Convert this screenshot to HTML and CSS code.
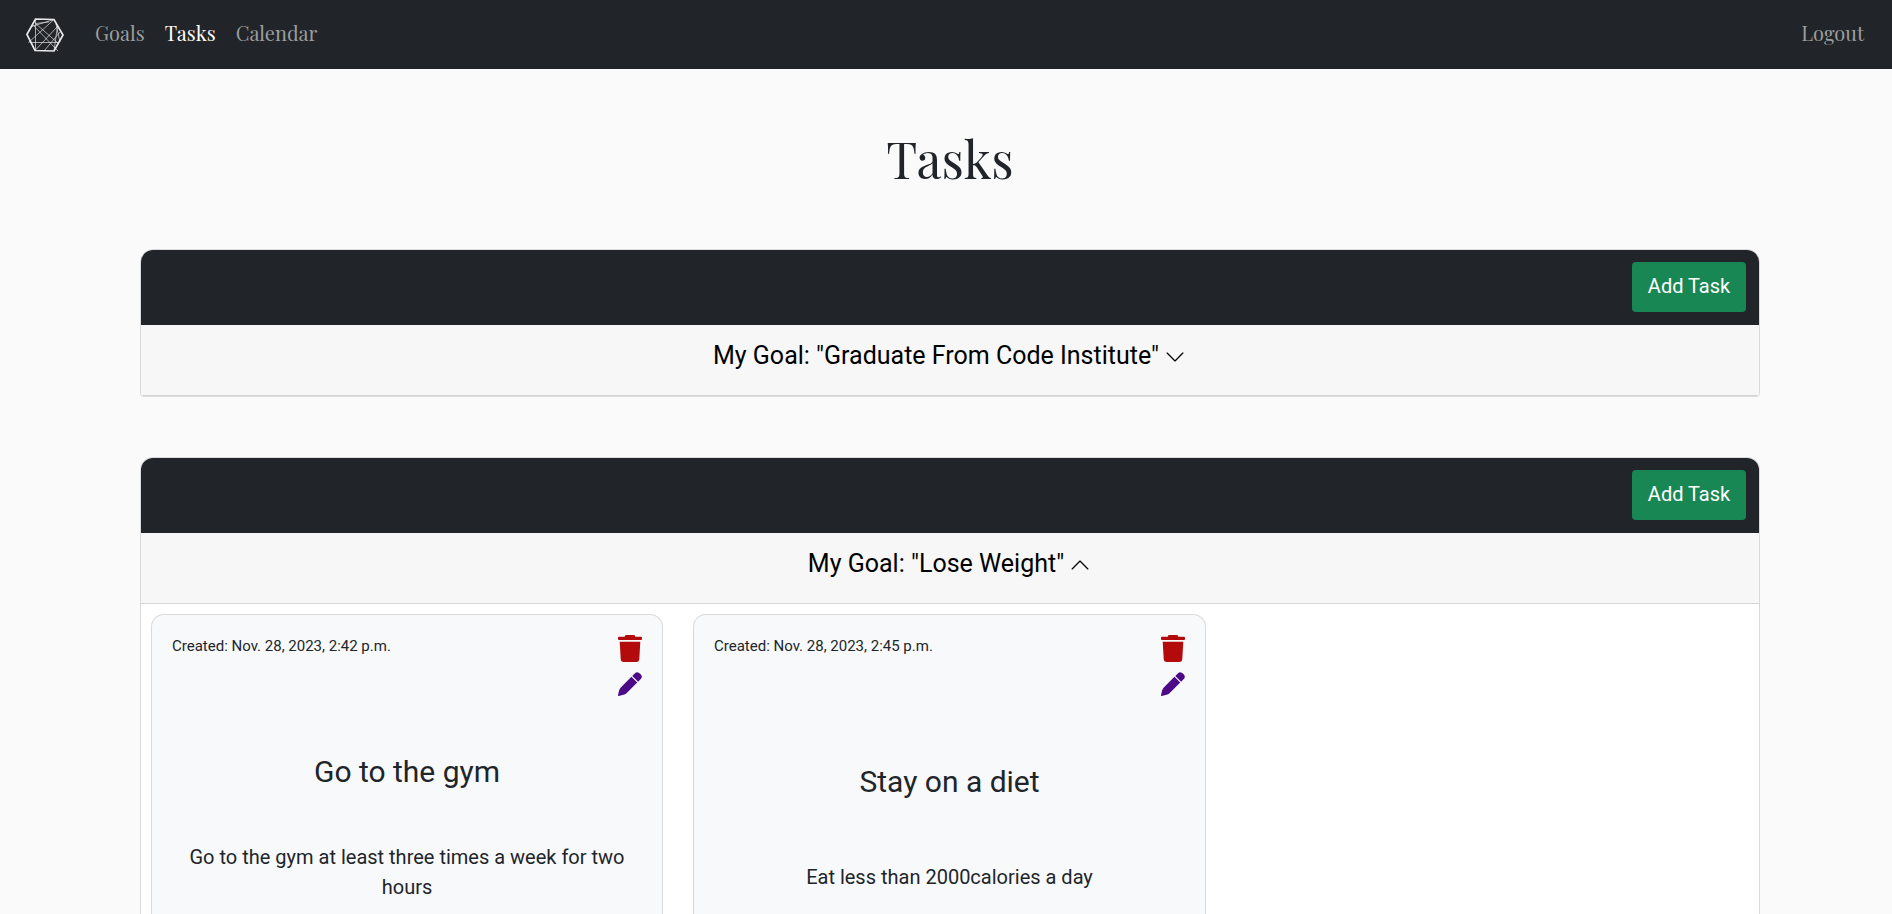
FILE: index.html
```html
<!DOCTYPE html>
<html lang="en">
<head>
<meta charset="utf-8">
<title>Tasks</title>
<link rel="stylesheet" href="styles.css">
</head>
<body>
<svg width="0" height="0" class="sprite" aria-hidden="true">
  <symbol id="trash" viewBox="0 0 24 27"><path d="M8 0h8q1 0 1.300 1.700H23q1 0 1 1v1.300q0 1-1 1H1q-1 0-1-1V2.700q0-1 1-1h5.700Q7 0 8 0zM1.700 6.700h20.600l-1 17.300q-.2 3-3 3H5.700q-2.800 0-3-3z"/></symbol>
  <symbol id="pencil" viewBox="0 0 24 24"><path d="M17 1.200q2.300-2.300 5.200.5 2.900 2.900.6 5.300l-2.700 2.700-5.800-5.800zM13.400 4.800l5.800 5.800L8.500 21.200q-1.200 1.200-3 1.600L.7 24q-.8.100-.7-.7l1.100-4.800q.4-1.800 1.700-3.100z"/></symbol>
</svg>
<nav class="navbar">
  <a class="brand" href="#" aria-label="Home">
    <svg width="38" height="34" viewBox="0 0 38 34" fill="none" stroke="#e8e9ea">
      <path stroke-width="1.700" d="M9.500 1L28 1.500 37 17 28 33 9 32.500 .9 16.500z"/>
      <path stroke-width=".9" opacity=".75" d="M9.500 1v31.500 M5.500 8.500L28 1.500 M28 1.500L2.500 24.500 M6 6L32 33 M9.500 5.500L23 4 M9.500 5.500L33 26 M9 32.500L31 9 M30 6l4 18 M31.500 8L28 33 M3.500 24.500H33 M18 33L34 14"/>
    </svg>
  </a>
  <a class="nav-link goals" href="#">Goals</a>
  <a class="nav-link active" href="#">Tasks</a>
  <a class="nav-link" href="#">Calendar</a>
  <a class="nav-link logout" href="#">Logout</a>
</nav>
<main class="container">
  <h1 class="title">Tasks</h1>
  <section class="goal collapsed">
    <div class="goal-bar"><button class="add">Add Task</button></div>
    <div class="goal-header"><span>My Goal: "Graduate From Code Institute"</span>
      <svg class="chevron" viewBox="0 0 16 16"><path d="M1 4.500l7 7 7-7"/></svg></div>
  </section>
  <section class="goal">
    <div class="goal-bar"><button class="add">Add Task</button></div>
    <div class="goal-header"><span>My Goal: "Lose Weight"</span>
      <svg class="chevron" viewBox="0 0 16 16"><path d="M1 11.500l7-7 7 7"/></svg></div>
    <div class="tasks">
      <article class="task">
        <div class="task-top"><span class="created">Created: Nov. 28, 2023, 2:42 p.m.</span>
          <div class="actions"><svg class="trash"><use href="#trash"/></svg><svg class="pencil"><use href="#pencil"/></svg></div></div>
        <h2 class="task-title">Go to the gym</h2>
        <p class="task-text">Go to the gym at least three times a week for two hours</p>
      </article>
      <article class="task short">
        <div class="task-top"><span class="created">Created: Nov. 28, 2023, 2:45 p.m.</span>
          <div class="actions"><svg class="trash"><use href="#trash"/></svg><svg class="pencil"><use href="#pencil"/></svg></div></div>
        <h2 class="task-title">Stay on a diet</h2>
        <p class="task-text">Eat less than 2000calories a day</p>
      </article>
    </div>
  </section>
</main>
</body>
</html>
```
FILE: styles.css
```css
* { box-sizing: border-box; }
html { height: 100%; overflow: hidden; }
body { display: flex; flex-direction: column; height: 100vh; margin: 0; background: #fafafa; color: #212529; font-family: Roboto, sans-serif; font-size: 20px; line-height: 30px; overflow: hidden; }
.sprite { position: absolute; }
.navbar { display: flex; flex: none; align-items: center; height: 69px; padding: 0 28px 0 26px; background: #212529; font-family: "Playfair Display", "Liberation Serif", serif; }
.brand { display: flex; width: 38px; }
.nav-link { margin: 0 0 4px 20px; color: #9b9d9f; font-size: 20px; text-decoration: none; }
.nav-link.goals { margin-left: 31px; }
.nav-link.active { color: #fff; }
.nav-link.logout { margin-left: auto; }
.container { display: flex; flex-direction: column; flex: 1; min-height: 0; width: 1620px; margin: 0 auto 0 140px; overflow: hidden; }
.title { flex: none; margin: 0; padding-top: 60px; height: 180px; text-align: center; font: 400 50px/60px "Playfair Display", "Liberation Serif", serif; }
.goal { flex: 1; min-height: 0; border: 1px solid #d9dadb; border-bottom: 0; border-radius: 13px 13px 0 0; background: #fff; overflow: hidden; }
.goal.collapsed { flex: none; margin-bottom: 60px; border-bottom: 1px solid #d9dadb; border-radius: 13px 13px 4px 4px; }
.goal-bar { display: flex; justify-content: flex-end; height: 75px; padding: 12px 13px; background: #212529; }
.add { width: 114px; height: 50px; padding: 0 0 2px; border: 0; border-radius: 4px; background: #198754; color: #fff; font: 400 20px/30px Roboto, sans-serif; }
.goal-header { display: flex; justify-content: center; gap: 7px; height: 71px; padding: 16px 3px 0 0; border-bottom: 1px solid #d4d5d6; background: #f7f7f7; color: #000; font-size: 25px; }
.chevron { width: 18px; height: 18px; margin-top: 7px; fill: none; stroke: #000; stroke-width: 1.100; stroke-linecap: round; stroke-linejoin: round; }
.tasks { display: flex; gap: 30px; height: 310px; padding: 10px 10px 0; }
.task { width: 512px; height: 300px; padding: 19px 20px 0; border: 1px solid #d9dadb; border-bottom: 0; border-radius: 13px 13px 0 0; background: #f8f9fb; text-align: center; }
.task.short { width: 513px; }
.task-top { display: flex; justify-content: space-between; height: 100px; }
.created { margin-top: -3px; font-size: 15px; }
.actions { display: flex; flex-direction: column; gap: 10px; }
.trash { width: 24px; height: 27px; fill: #b30b0b; margin-top: 1px; }
.pencil { width: 24px; height: 24px; fill: #4c0a86; }
.task-title { margin: 20px 0 0; font: 400 30px/36px Roboto, sans-serif; }
.task-text { margin: 52px 10px 0; }
.short .task-title { margin-top: 30px; }
.short .task-text { margin-top: 62px; }
```
